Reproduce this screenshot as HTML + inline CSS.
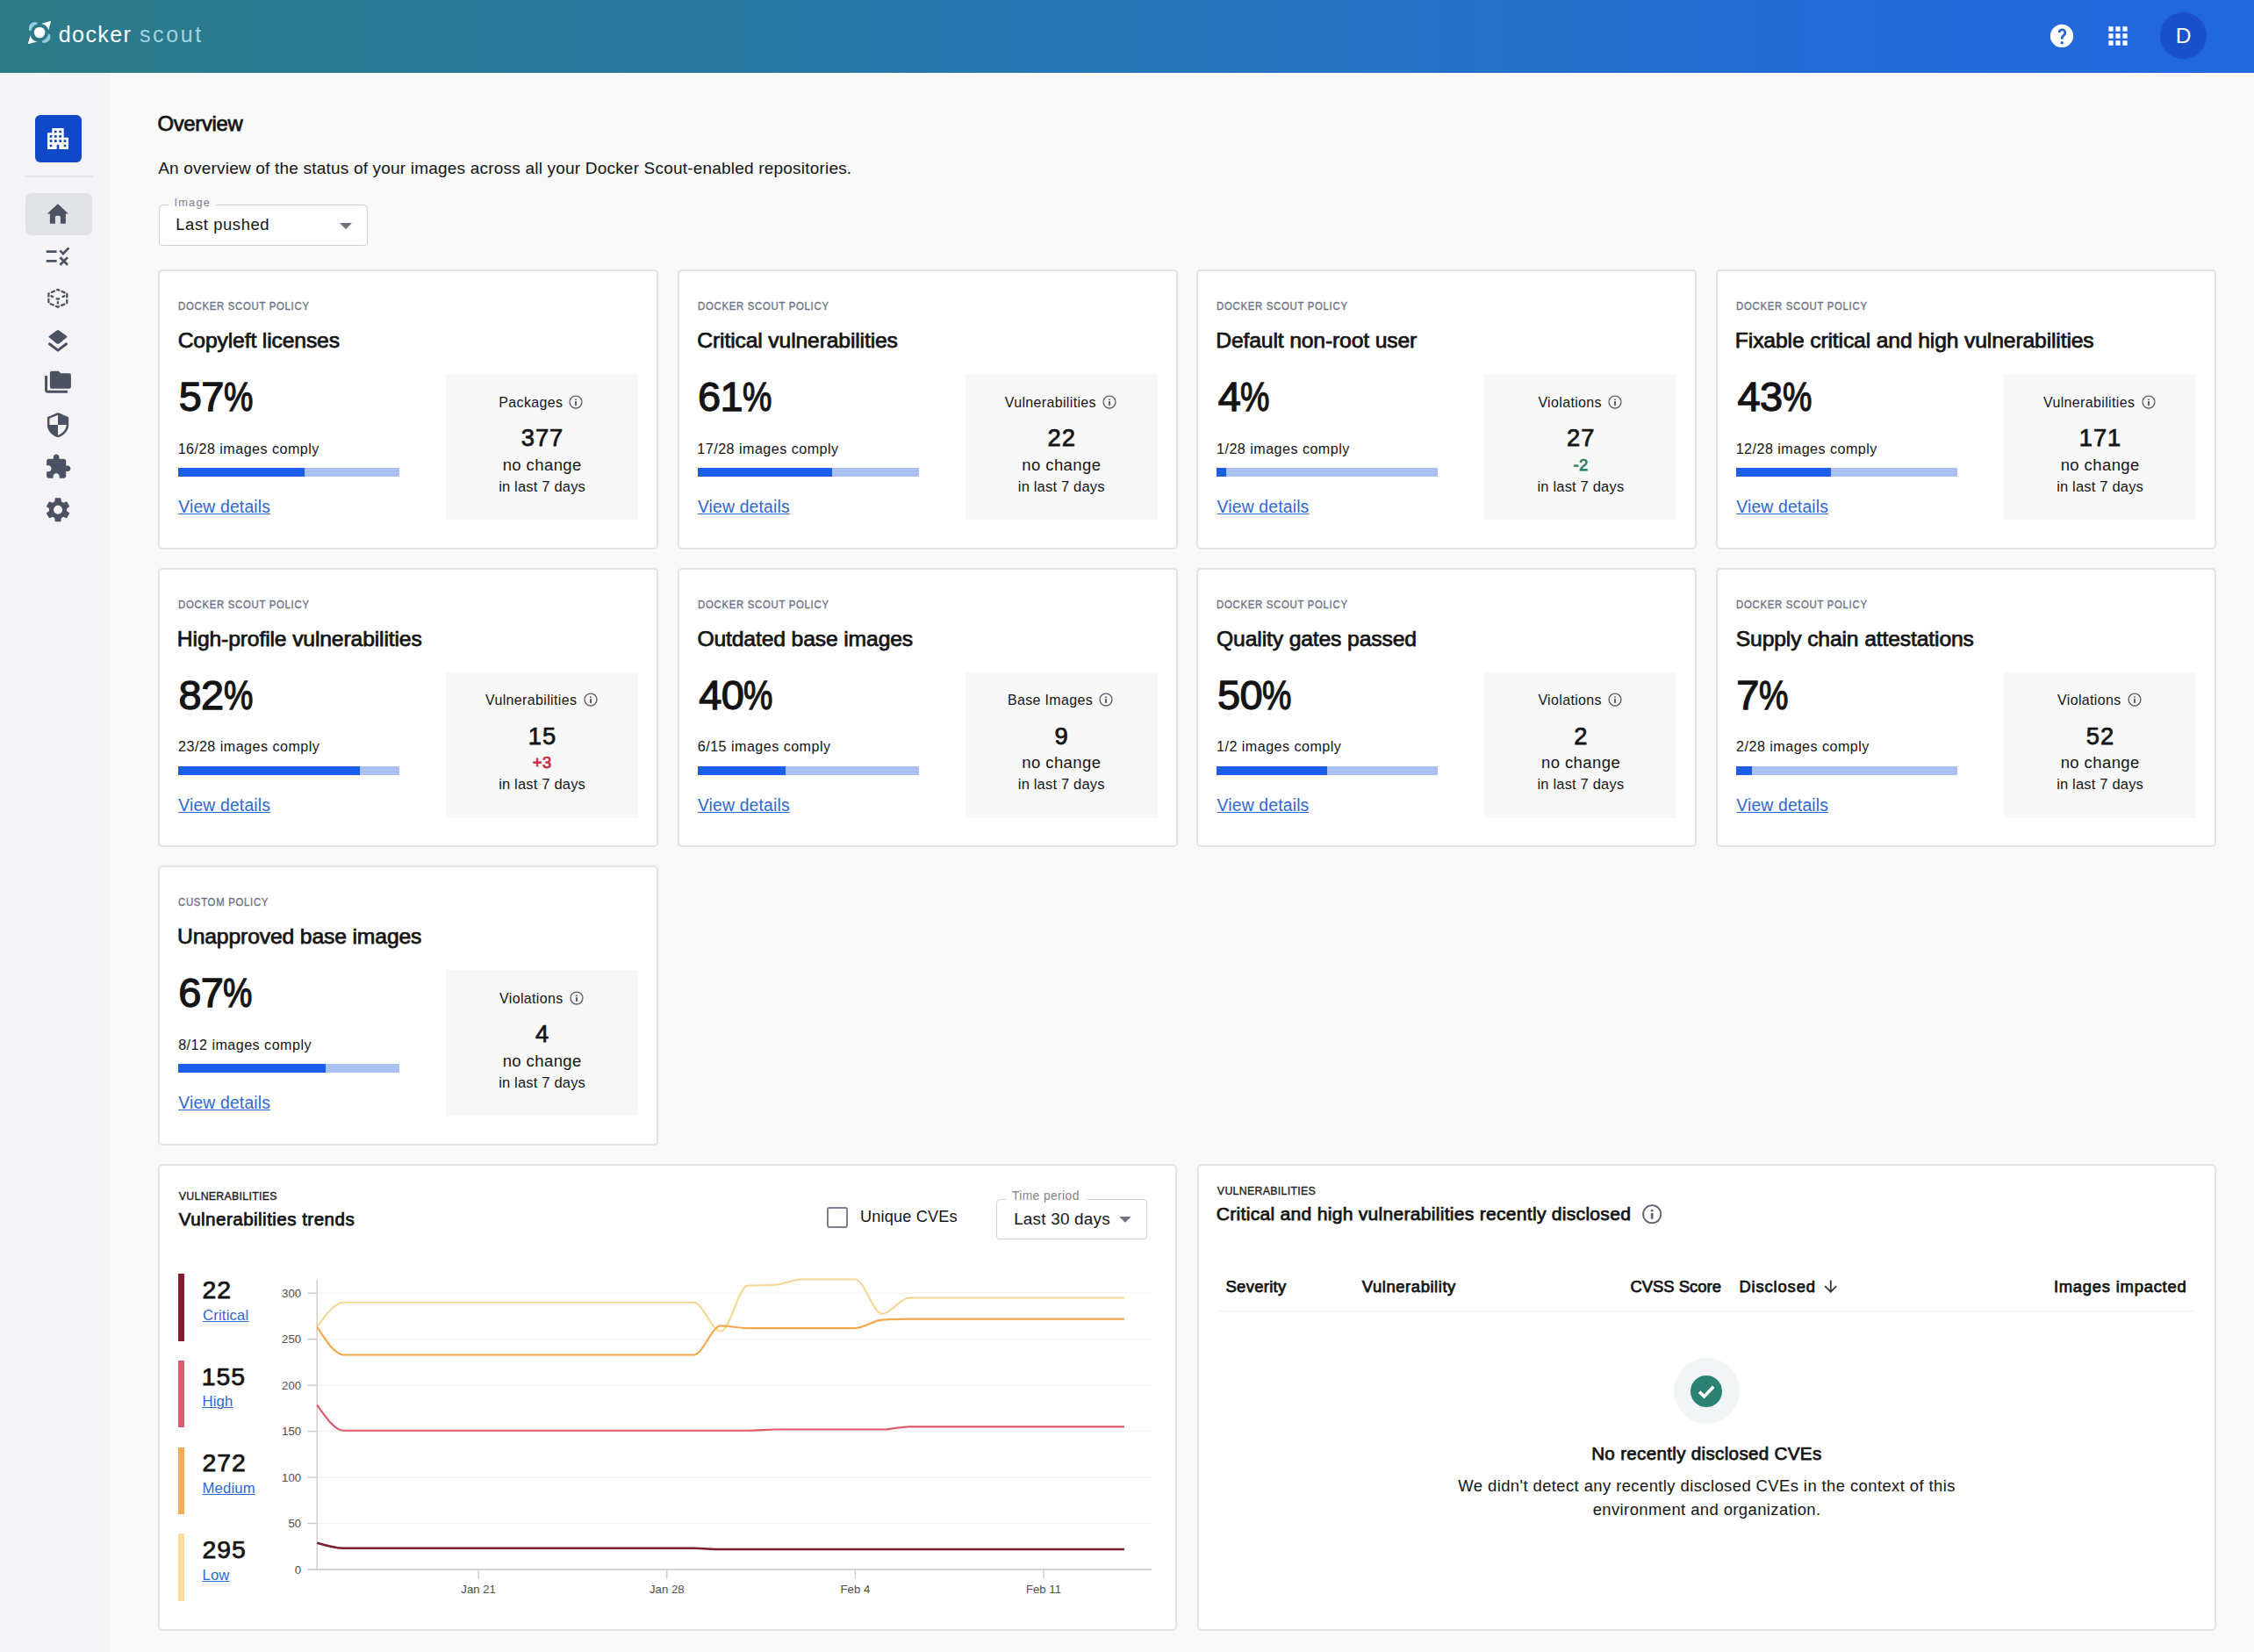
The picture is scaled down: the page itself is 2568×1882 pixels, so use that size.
<!DOCTYPE html><html><head><meta charset="utf-8"><title>Docker Scout</title><style>
*{box-sizing:border-box;margin:0;padding:0}
html,body{width:2568px;height:1882px;overflow:hidden}
body{position:relative;background:#f9f9f9;font-family:"Liberation Sans",sans-serif;color:#141414}
.t{position:absolute;line-height:1;white-space:nowrap}
.m{-webkit-text-stroke:0.75px currentColor}
.abs{position:absolute}
#hdr{position:absolute;left:0;top:0;width:2568px;height:83px;background:linear-gradient(90deg,#2c7a87 0%,#2a79a0 30%,#2673bd 55%,#236bd3 78%,#2167de 100%)}
#side{position:absolute;left:0;top:83px;width:126px;height:1799px;background:#f4f4f6}
.card{position:absolute;background:#fff;border:2px solid #e3e3e3;border-radius:5px}
.box{position:absolute;background:#f8f8f9}
.lbl{color:#6b7083;-webkit-text-stroke:0.35px currentColor!important}
.sm{-webkit-text-stroke:0.35px currentColor!important}
.bar{position:absolute;height:10px;background:#a9c1f1}
.bar i{position:absolute;left:0;top:0;height:100%;background:#1d5ee8}
.lnk{color:#2f67d2;text-decoration:underline;text-decoration-thickness:1.2px;text-underline-offset:0.6px}
</style></head><body>
<div id="hdr"></div>
<svg class="abs" style="left:0;top:0" width="240" height="83" viewBox="0 0 240 83">
<path d="M33.38 34.93 L33.20 34.32 L33.05 33.68 L32.95 33.02 L32.90 32.36 L32.91 31.69 L32.97 31.02 L33.09 30.35 L33.28 29.71 L33.52 29.08 L33.83 28.48 L34.20 27.92 L34.63 27.41 L35.11 26.94 L35.64 26.52 L36.20 26.16 L36.80 25.86 L37.43 25.62 L38.08 25.44 L38.75 25.32 L39.41 25.25 L40.08 25.25 L40.74 25.29 L41.39 25.38 L42.02 25.51 L42.54 27.44 L42.09 27.57 L41.65 27.72 L41.21 27.90 L40.79 28.09 L40.37 28.30 L39.96 28.54 L39.57 28.79 L39.19 29.06 L38.82 29.35 L38.46 29.65 L38.13 29.97 L37.80 30.31 L37.49 30.66 L37.20 31.03 L36.93 31.41 L36.67 31.80 L36.44 32.21 L36.22 32.62 L36.02 33.05 L35.85 33.48 L35.69 33.92 L35.56 34.37 L35.44 34.82 L35.35 35.28 Z" fill="#a6dcec" fill-opacity="0.85"/>
<path d="M56.82 39.07 L57.00 39.68 L57.15 40.32 L57.25 40.98 L57.30 41.64 L57.29 42.31 L57.23 42.98 L57.11 43.65 L56.92 44.29 L56.68 44.92 L56.37 45.52 L56.00 46.08 L55.57 46.59 L55.09 47.06 L54.56 47.48 L54.00 47.84 L53.40 48.14 L52.77 48.38 L52.12 48.56 L51.45 48.68 L50.79 48.75 L50.12 48.75 L49.46 48.71 L48.81 48.62 L48.18 48.49 L47.66 46.56 L48.11 46.43 L48.55 46.28 L48.99 46.10 L49.41 45.91 L49.83 45.70 L50.24 45.46 L50.63 45.21 L51.01 44.94 L51.38 44.65 L51.74 44.35 L52.07 44.03 L52.40 43.69 L52.71 43.34 L53.00 42.97 L53.27 42.59 L53.53 42.20 L53.76 41.79 L53.98 41.38 L54.18 40.95 L54.35 40.52 L54.51 40.08 L54.64 39.63 L54.76 39.18 L54.85 38.72 Z" fill="#a6dcec" fill-opacity="0.85"/>
<path d="M47.2 26.9 L58.2 23.8 L55.3 34.6 A10.2 10.2 0 0 0 47.2 26.9 Z" fill="#fff"/>
<path d="M31.7 50.2 L34.5 40.2 A10.2 10.2 0 0 0 42.5 47.6 Z" fill="#fff"/>
<circle cx="45.1" cy="37" r="6.3" fill="#fff"/>
</svg>
<div class="t" style="left:66.75px;top:27.00px;font-size:25.12px;letter-spacing:1.357px;color:#fff">docker</div>
<div class="t" style="left:159.00px;top:27.00px;font-size:25.12px;letter-spacing:2.562px;color:#9fd3e3">scout</div>
<svg class="abs" style="left:2330px;top:20px" width="40" height="40" viewBox="2330 20 40 40"><circle cx="2349" cy="40.9" r="13.1" fill="#fff"/><path d="M2346 37.3 A3.4 3.4 0 1 1 2351.7 39.7 L2350.3 41 Q2349.3 41.9 2349.3 43.3 V44.5" fill="none" stroke="#2161c9" stroke-width="2.7"/><circle cx="2349.2" cy="48.8" r="1.7" fill="#2161c9"/></svg>
<svg class="abs" style="left:2396.8px;top:24.7px" width="32" height="32" viewBox="0 0 24 24"><path fill="#fff" d="M4 8h4V4H4v4zm6 12h4v-4h-4v4zm-6 0h4v-4H4v4zm0-6h4v-4H4v4zm6 0h4v-4h-4v4zm6-10v4h4V4h-4zm-6 4h4V4h-4v4zm6 6h4v-4h-4v4zm0 6h4v-4h-4v4z"/></svg>
<div class="abs" style="left:2461.1px;top:14.2px;width:52.7px;height:52.7px;border-radius:50%;background:#1a50c9"></div>
<div class="t" style="left:2187.50px;top:29.00px;font-size:24.50px;width:600.00px;text-align:center;color:#fff">D</div>
<div id="side"></div>
<div class="abs" style="left:40px;top:131px;width:53px;height:54px;border-radius:6px;background:#1049c8"></div>
<svg class="abs" style="left:50px;top:141.9px" width="32" height="32" viewBox="0 0 24 24"><path fill="#fff" d="M17 11V3H7v4H3v14h8v-4h2v4h8V11h-4zM7 19H5v-2h2v2zm0-4H5v-2h2v2zm0-4H5V9h2v2zm4 4H9v-2h2v2zm0-4H9V9h2v2zm0-4H9V5h2v2zm4 8h-2v-2h2v2zm0-4h-2V9h2v2zm0-4h-2V5h2v2zm4 12h-2v-2h2v2zm0-4h-2v-2h2v2z"/></svg>
<div class="abs" style="left:28px;top:200.3px;width:78px;height:1.5px;background:#e2e3e7"></div>
<div class="abs" style="left:29px;top:220px;width:76px;height:48px;border-radius:7px;background:#e1e3e7"></div>
<svg class="abs" style="left:0;top:0" width="126" height="620" viewBox="0 0 126 620">
<path fill="#4c5262" d="M65.85 232.3 L78 243.6 L74.9 243.6 L74.9 254.8 L68.9 254.8 L68.9 247.6 Q68.9 245.8 67.1 245.8 L64.7 245.8 Q62.9 245.8 62.9 247.6 L62.9 254.8 L56.9 254.8 L56.9 243.6 L53.7 243.6 Z"/>
<g stroke="#4c5262" stroke-width="2.7" fill="none">
<path d="M52.8 286.6 H64.6 M52.8 297.4 H64.6"/>
<path d="M68.3 285.4 L71.9 289 L78.4 282.4"/>
<path d="M68.4 293.2 L77 301.8 M77 293.2 L68.4 301.8"/>
</g>
<g stroke="#4c5262" stroke-width="2.3" fill="none" stroke-linecap="round" stroke-dasharray="3.4 3.4" stroke-dashoffset="1.7">
<path d="M65.85 329.9 L76.3 334.5 L76.3 345.3 L65.85 349.7 L55.4 345.3 L55.4 334.5 Z"/>
</g>
<g stroke="#4c5262" stroke-width="2.3" fill="none" stroke-linecap="round">
<path d="M58.4 337.3 L60.2 338.1 M71.5 338.1 L73.3 337.3 M64.6 340.3 L65.85 341 L67.1 340.3 M65.85 344.2 L65.85 345.6"/>
</g>
<path fill="#4c5262" d="M66 375.9 Q66.8 375.9 67.4 376.4 L76.2 383 Q76.9 383.6 76.2 384.2 L67.4 391.4 Q66 392.3 64.6 391.4 L55.8 384.2 Q55.1 383.6 55.8 383 L64.6 376.4 Q65.2 375.9 66 375.9 Z"/>
<path fill="none" stroke="#4c5262" stroke-width="3" stroke-linecap="round" stroke-linejoin="round" d="M56.4 391.8 L66 399.1 L75.6 391.8"/>
<path fill="#4c5262" d="M58.9 422.7 H66.8 L69.3 425.3 H78.9 Q80.9 425.3 80.9 427.3 V440.7 Q80.9 442.7 78.9 442.7 H58.9 Q56.9 442.7 56.9 440.7 V424.7 Q56.9 422.7 58.9 422.7 Z"/>
<path fill="none" stroke="#4c5262" stroke-width="3" d="M52.55 428 V444.3 Q52.55 446.3 54.55 446.3 H76.9"/>
<path fill="#4c5262" d="M66 469.9 L78.2 475.2 L78.2 484 C78.2 490.5 72.8 496.6 66 498.3 C59.2 496.6 53.9 490.5 53.9 484 L53.9 475.2 Z"/>
<path fill="#f4f4f6" d="M66 472.7 L56.4 476.8 L56.4 484.1 L66 484.1 Z"/>
<path fill="#f4f4f6" d="M66 484.1 L75.7 484.1 C75.2 489.5 71.2 494.3 66 495.7 Z"/>
<g transform="translate(50.5 516.2) scale(1.3)"><path fill="#4c5262" d="M20.5 11H19V7c0-1.1-.9-2-2-2h-4V3.5C13 2.12 11.88 1 10.5 1S8 2.12 8 3.5V5H4c-1.1 0-1.99.9-1.99 2v3.8H3.5c1.49 0 2.7 1.21 2.7 2.7s-1.21 2.7-2.7 2.7H2V20c0 1.1.9 2 2 2h3.8v-1.5c0-1.49 1.21-2.7 2.7-2.7 1.49 0 2.7 1.21 2.7 2.7V22H17c1.1 0 2-.9 2-2v-4h1.5c1.38 0 2.5-1.12 2.5-2.5S21.88 11 20.5 11z"/></g>
<g transform="translate(49.26 564) scale(1.4)"><path fill="#4c5262" d="M19.14 12.94c.04-.3.06-.61.06-.94 0-.32-.02-.64-.07-.94l2.03-1.58a.49.49 0 00.12-.61l-1.92-3.32a.49.49 0 00-.59-.22l-2.39.96c-.5-.38-1.03-.7-1.62-.94l-.36-2.54a.48.48 0 00-.48-.41h-3.84c-.24 0-.43.17-.47.41l-.36 2.54c-.59.24-1.13.57-1.62.94l-2.39-.96a.48.48 0 00-.59.22L2.74 8.87c-.12.21-.08.47.12.61l2.03 1.58c-.05.3-.09.63-.09.94s.02.64.07.94l-2.03 1.58a.49.49 0 00-.12.61l1.92 3.32c.12.22.37.29.59.22l2.39-.96c.5.38 1.03.7 1.62.94l.36 2.54c.05.24.24.41.48.41h3.84c.24 0 .44-.17.47-.41l.36-2.54c.59-.24 1.13-.56 1.62-.94l2.39.96c.22.08.47 0 .59-.22l1.92-3.32c.12-.22.07-.47-.12-.61l-2.01-1.58zM12 15.6a3.6 3.6 0 110-7.2 3.6 3.6 0 010 7.2z"/></g>
</svg>
<div class="t m" style="left:179.57px;top:129.00px;font-size:23.84px;letter-spacing:-0.324px;">Overview</div>
<div class="t" style="left:180.16px;top:182.00px;font-size:19.04px;letter-spacing:0.186px;">An overview of the status of your images across all your Docker Scout-enabled repositories.</div>
<div class="abs" style="left:181px;top:233px;width:238px;height:47px;border:1.5px solid #d0d1d5;border-radius:4px;background:#fff"></div>
<div class="abs" style="left:192px;top:232px;width:54px;height:3px;background:#f9f9f9"></div>
<div class="t" style="left:198.42px;top:225.00px;font-size:12.79px;letter-spacing:1.250px;color:#7f828c">Image</div>
<div class="t" style="left:200.29px;top:247.00px;font-size:18.46px;letter-spacing:0.582px;">Last pushed</div>
<svg class="abs" style="left:387px;top:253.8px" width="14" height="7.2" viewBox="0 0 14 7.2"><path d="M0 0h14L7 7.2z" fill="#6e7180"/></svg>
<div class="card" style="left:180.00px;top:307.00px;width:570.0px;height:318.67px"></div>
<div class="t lbl m" style="left:202.97px;top:342.00px;font-size:13.23px;letter-spacing:0.824px;transform:scaleX(0.86);transform-origin:0 0">DOCKER SCOUT POLICY</div>
<div class="t m" style="left:202.65px;top:376.00px;font-size:24.71px;letter-spacing:-0.146px;">Copyleft licenses</div>
<div class="t m" style="left:203.72px;top:429.00px;font-size:46.95px;letter-spacing:-0.600px;-webkit-text-stroke:1.3px currentColor">57<span style="display:inline-block;transform:scaleX(0.8);transform-origin:0 0">%</span></div>
<div class="t" style="left:202.67px;top:503.00px;font-size:16.13px;letter-spacing:0.473px;">16/28 images comply</div>
<div class="bar" style="left:203.00px;top:533.00px;width:252px"><i style="width:144.00px"></i></div>
<div class="t lnk" style="left:203.22px;top:568.00px;font-size:19.33px;letter-spacing:0.176px;">View details</div>
<div class="box" style="left:508.00px;top:426.00px;width:219px;height:166px"></div>
<div class="t" style="left:568.34px;top:451.00px;font-size:15.99px;letter-spacing:0.354px;">Packages</div>
<svg class="abs" style="left:648.25px;top:449.60px" width="16" height="16" viewBox="0 0 16 16"><circle cx="8" cy="8" r="6.95" fill="none" stroke="#5b5e67" stroke-width="1.35"/><rect x="7" y="7.2" width="2" height="4.7" fill="#5b5e67"/><circle cx="8" cy="5.3" r="1" fill="#5b5e67"/></svg>
<div class="t m" style="left:318.01px;top:485.00px;font-size:27.33px;letter-spacing:1.012px;width:600.00px;text-align:center;">377</div>
<div class="t" style="left:317.71px;top:521.00px;font-size:18.49px;letter-spacing:0.421px;width:600.00px;text-align:center;">no change</div>
<div class="t" style="left:317.58px;top:547.00px;font-size:16.56px;letter-spacing:0.165px;width:600.00px;text-align:center;">in last 7 days</div>
<div class="card" style="left:771.67px;top:307.00px;width:570.0px;height:318.67px"></div>
<div class="t lbl m" style="left:794.63px;top:342.00px;font-size:13.23px;letter-spacing:0.824px;transform:scaleX(0.86);transform-origin:0 0">DOCKER SCOUT POLICY</div>
<div class="t m" style="left:794.31px;top:376.00px;font-size:24.71px;letter-spacing:-0.146px;">Critical vulnerabilities</div>
<div class="t m" style="left:794.88px;top:429.00px;font-size:46.95px;letter-spacing:-0.600px;-webkit-text-stroke:1.3px currentColor">61<span style="display:inline-block;transform:scaleX(0.8);transform-origin:0 0">%</span></div>
<div class="t" style="left:794.34px;top:503.00px;font-size:16.13px;letter-spacing:0.473px;">17/28 images comply</div>
<div class="bar" style="left:794.67px;top:533.00px;width:252px"><i style="width:153.00px"></i></div>
<div class="t lnk" style="left:794.88px;top:568.00px;font-size:19.33px;letter-spacing:0.176px;">View details</div>
<div class="box" style="left:1099.67px;top:426.00px;width:219px;height:166px"></div>
<div class="t" style="left:1144.73px;top:451.00px;font-size:15.99px;letter-spacing:0.354px;">Vulnerabilities</div>
<svg class="abs" style="left:1256.44px;top:449.60px" width="16" height="16" viewBox="0 0 16 16"><circle cx="8" cy="8" r="6.95" fill="none" stroke="#5b5e67" stroke-width="1.35"/><rect x="7" y="7.2" width="2" height="4.7" fill="#5b5e67"/><circle cx="8" cy="5.3" r="1" fill="#5b5e67"/></svg>
<div class="t m" style="left:909.67px;top:485.00px;font-size:27.33px;letter-spacing:1.012px;width:600.00px;text-align:center;">22</div>
<div class="t" style="left:909.38px;top:521.00px;font-size:18.49px;letter-spacing:0.421px;width:600.00px;text-align:center;">no change</div>
<div class="t" style="left:909.25px;top:547.00px;font-size:16.56px;letter-spacing:0.165px;width:600.00px;text-align:center;">in last 7 days</div>
<div class="card" style="left:1363.33px;top:307.00px;width:570.0px;height:318.67px"></div>
<div class="t lbl m" style="left:1386.30px;top:342.00px;font-size:13.23px;letter-spacing:0.824px;transform:scaleX(0.86);transform-origin:0 0">DOCKER SCOUT POLICY</div>
<div class="t m" style="left:1385.21px;top:376.00px;font-size:24.71px;letter-spacing:-0.146px;">Default non-root user</div>
<div class="t m" style="left:1387.86px;top:429.00px;font-size:46.95px;letter-spacing:-0.600px;-webkit-text-stroke:1.3px currentColor">4<span style="display:inline-block;transform:scaleX(0.8);transform-origin:0 0">%</span></div>
<div class="t" style="left:1386.00px;top:503.00px;font-size:16.13px;letter-spacing:0.473px;">1/28 images comply</div>
<div class="bar" style="left:1386.33px;top:533.00px;width:252px"><i style="width:10.30px"></i></div>
<div class="t lnk" style="left:1386.55px;top:568.00px;font-size:19.33px;letter-spacing:0.176px;">View details</div>
<div class="box" style="left:1691.33px;top:426.00px;width:219px;height:166px"></div>
<div class="t" style="left:1752.38px;top:451.00px;font-size:15.99px;letter-spacing:0.354px;">Violations</div>
<svg class="abs" style="left:1832.11px;top:449.60px" width="16" height="16" viewBox="0 0 16 16"><circle cx="8" cy="8" r="6.95" fill="none" stroke="#5b5e67" stroke-width="1.35"/><rect x="7" y="7.2" width="2" height="4.7" fill="#5b5e67"/><circle cx="8" cy="5.3" r="1" fill="#5b5e67"/></svg>
<div class="t m" style="left:1501.34px;top:485.00px;font-size:27.33px;letter-spacing:1.012px;width:600.00px;text-align:center;">27</div>
<div class="t m" style="left:1501.04px;top:521.00px;font-size:18.49px;letter-spacing:0.421px;width:600.00px;text-align:center;color:#2b7d68">-2</div>
<div class="t" style="left:1500.92px;top:547.00px;font-size:16.56px;letter-spacing:0.165px;width:600.00px;text-align:center;">in last 7 days</div>
<div class="card" style="left:1955.00px;top:307.00px;width:570.0px;height:318.67px"></div>
<div class="t lbl m" style="left:1977.97px;top:342.00px;font-size:13.23px;letter-spacing:0.824px;transform:scaleX(0.86);transform-origin:0 0">DOCKER SCOUT POLICY</div>
<div class="t m" style="left:1976.87px;top:376.00px;font-size:24.71px;letter-spacing:-0.146px;">Fixable critical and high vulnerabilities</div>
<div class="t m" style="left:1979.52px;top:429.00px;font-size:46.95px;letter-spacing:-0.600px;-webkit-text-stroke:1.3px currentColor">43<span style="display:inline-block;transform:scaleX(0.8);transform-origin:0 0">%</span></div>
<div class="t" style="left:1977.67px;top:503.00px;font-size:16.13px;letter-spacing:0.473px;">12/28 images comply</div>
<div class="bar" style="left:1978.00px;top:533.00px;width:252px"><i style="width:108.00px"></i></div>
<div class="t lnk" style="left:1978.22px;top:568.00px;font-size:19.33px;letter-spacing:0.176px;">View details</div>
<div class="box" style="left:2283.00px;top:426.00px;width:219px;height:166px"></div>
<div class="t" style="left:2328.06px;top:451.00px;font-size:15.99px;letter-spacing:0.354px;">Vulnerabilities</div>
<svg class="abs" style="left:2439.77px;top:449.60px" width="16" height="16" viewBox="0 0 16 16"><circle cx="8" cy="8" r="6.95" fill="none" stroke="#5b5e67" stroke-width="1.35"/><rect x="7" y="7.2" width="2" height="4.7" fill="#5b5e67"/><circle cx="8" cy="5.3" r="1" fill="#5b5e67"/></svg>
<div class="t m" style="left:2093.01px;top:485.00px;font-size:27.33px;letter-spacing:1.012px;width:600.00px;text-align:center;">171</div>
<div class="t" style="left:2092.71px;top:521.00px;font-size:18.49px;letter-spacing:0.421px;width:600.00px;text-align:center;">no change</div>
<div class="t" style="left:2092.58px;top:547.00px;font-size:16.56px;letter-spacing:0.165px;width:600.00px;text-align:center;">in last 7 days</div>
<div class="card" style="left:180.00px;top:646.67px;width:570.0px;height:318.67px"></div>
<div class="t lbl m" style="left:202.97px;top:682.00px;font-size:13.23px;letter-spacing:0.824px;transform:scaleX(0.86);transform-origin:0 0">DOCKER SCOUT POLICY</div>
<div class="t m" style="left:201.87px;top:716.00px;font-size:24.71px;letter-spacing:-0.146px;">High-profile vulnerabilities</div>
<div class="t m" style="left:203.56px;top:769.00px;font-size:46.95px;letter-spacing:-0.600px;-webkit-text-stroke:1.3px currentColor">82<span style="display:inline-block;transform:scaleX(0.8);transform-origin:0 0">%</span></div>
<div class="t" style="left:203.09px;top:842.00px;font-size:16.13px;letter-spacing:0.473px;">23/28 images comply</div>
<div class="bar" style="left:203.00px;top:872.67px;width:252px"><i style="width:207.00px"></i></div>
<div class="t lnk" style="left:203.22px;top:908.00px;font-size:19.33px;letter-spacing:0.176px;">View details</div>
<div class="box" style="left:508.00px;top:765.67px;width:219px;height:166px"></div>
<div class="t" style="left:553.06px;top:790.00px;font-size:15.99px;letter-spacing:0.354px;">Vulnerabilities</div>
<svg class="abs" style="left:664.77px;top:789.27px" width="16" height="16" viewBox="0 0 16 16"><circle cx="8" cy="8" r="6.95" fill="none" stroke="#5b5e67" stroke-width="1.35"/><rect x="7" y="7.2" width="2" height="4.7" fill="#5b5e67"/><circle cx="8" cy="5.3" r="1" fill="#5b5e67"/></svg>
<div class="t m" style="left:318.01px;top:825.00px;font-size:27.33px;letter-spacing:1.012px;width:600.00px;text-align:center;">15</div>
<div class="t m" style="left:317.71px;top:860.00px;font-size:18.49px;letter-spacing:0.421px;width:600.00px;text-align:center;color:#d1263e">+3</div>
<div class="t" style="left:317.58px;top:886.00px;font-size:16.56px;letter-spacing:0.165px;width:600.00px;text-align:center;">in last 7 days</div>
<div class="card" style="left:771.67px;top:646.67px;width:570.0px;height:318.67px"></div>
<div class="t lbl m" style="left:794.63px;top:682.00px;font-size:13.23px;letter-spacing:0.824px;transform:scaleX(0.86);transform-origin:0 0">DOCKER SCOUT POLICY</div>
<div class="t m" style="left:794.40px;top:716.00px;font-size:24.71px;letter-spacing:-0.146px;">Outdated base images</div>
<div class="t m" style="left:796.19px;top:769.00px;font-size:46.95px;letter-spacing:-0.600px;-webkit-text-stroke:1.3px currentColor">40<span style="display:inline-block;transform:scaleX(0.8);transform-origin:0 0">%</span></div>
<div class="t" style="left:794.75px;top:842.00px;font-size:16.13px;letter-spacing:0.473px;">6/15 images comply</div>
<div class="bar" style="left:794.67px;top:872.67px;width:252px"><i style="width:100.80px"></i></div>
<div class="t lnk" style="left:794.88px;top:908.00px;font-size:19.33px;letter-spacing:0.176px;">View details</div>
<div class="box" style="left:1099.67px;top:765.67px;width:219px;height:166px"></div>
<div class="t" style="left:1147.92px;top:790.00px;font-size:15.99px;letter-spacing:0.354px;">Base Images</div>
<svg class="abs" style="left:1252.00px;top:789.27px" width="16" height="16" viewBox="0 0 16 16"><circle cx="8" cy="8" r="6.95" fill="none" stroke="#5b5e67" stroke-width="1.35"/><rect x="7" y="7.2" width="2" height="4.7" fill="#5b5e67"/><circle cx="8" cy="5.3" r="1" fill="#5b5e67"/></svg>
<div class="t m" style="left:909.67px;top:825.00px;font-size:27.33px;letter-spacing:1.012px;width:600.00px;text-align:center;">9</div>
<div class="t" style="left:909.38px;top:860.00px;font-size:18.49px;letter-spacing:0.421px;width:600.00px;text-align:center;">no change</div>
<div class="t" style="left:909.25px;top:886.00px;font-size:16.56px;letter-spacing:0.165px;width:600.00px;text-align:center;">in last 7 days</div>
<div class="card" style="left:1363.33px;top:646.67px;width:570.0px;height:318.67px"></div>
<div class="t lbl m" style="left:1386.30px;top:682.00px;font-size:13.23px;letter-spacing:0.824px;transform:scaleX(0.86);transform-origin:0 0">DOCKER SCOUT POLICY</div>
<div class="t m" style="left:1386.06px;top:716.00px;font-size:24.71px;letter-spacing:-0.146px;">Quality gates passed</div>
<div class="t m" style="left:1387.05px;top:769.00px;font-size:46.95px;letter-spacing:-0.600px;-webkit-text-stroke:1.3px currentColor">50<span style="display:inline-block;transform:scaleX(0.8);transform-origin:0 0">%</span></div>
<div class="t" style="left:1386.00px;top:842.00px;font-size:16.13px;letter-spacing:0.473px;">1/2 images comply</div>
<div class="bar" style="left:1386.33px;top:872.67px;width:252px"><i style="width:126.00px"></i></div>
<div class="t lnk" style="left:1386.55px;top:908.00px;font-size:19.33px;letter-spacing:0.176px;">View details</div>
<div class="box" style="left:1691.33px;top:765.67px;width:219px;height:166px"></div>
<div class="t" style="left:1752.38px;top:790.00px;font-size:15.99px;letter-spacing:0.354px;">Violations</div>
<svg class="abs" style="left:1832.11px;top:789.27px" width="16" height="16" viewBox="0 0 16 16"><circle cx="8" cy="8" r="6.95" fill="none" stroke="#5b5e67" stroke-width="1.35"/><rect x="7" y="7.2" width="2" height="4.7" fill="#5b5e67"/><circle cx="8" cy="5.3" r="1" fill="#5b5e67"/></svg>
<div class="t m" style="left:1501.34px;top:825.00px;font-size:27.33px;letter-spacing:1.012px;width:600.00px;text-align:center;">2</div>
<div class="t" style="left:1501.04px;top:860.00px;font-size:18.49px;letter-spacing:0.421px;width:600.00px;text-align:center;">no change</div>
<div class="t" style="left:1500.92px;top:886.00px;font-size:16.56px;letter-spacing:0.165px;width:600.00px;text-align:center;">in last 7 days</div>
<div class="card" style="left:1955.00px;top:646.67px;width:570.0px;height:318.67px"></div>
<div class="t lbl m" style="left:1977.97px;top:682.00px;font-size:13.23px;letter-spacing:0.824px;transform:scaleX(0.86);transform-origin:0 0">DOCKER SCOUT POLICY</div>
<div class="t m" style="left:1977.78px;top:716.00px;font-size:24.71px;letter-spacing:-0.146px;">Supply chain attestations</div>
<div class="t m" style="left:1978.19px;top:769.00px;font-size:46.95px;letter-spacing:-0.600px;-webkit-text-stroke:1.3px currentColor">7<span style="display:inline-block;transform:scaleX(0.8);transform-origin:0 0">%</span></div>
<div class="t" style="left:1978.09px;top:842.00px;font-size:16.13px;letter-spacing:0.473px;">2/28 images comply</div>
<div class="bar" style="left:1978.00px;top:872.67px;width:252px"><i style="width:18.00px"></i></div>
<div class="t lnk" style="left:1978.22px;top:908.00px;font-size:19.33px;letter-spacing:0.176px;">View details</div>
<div class="box" style="left:2283.00px;top:765.67px;width:219px;height:166px"></div>
<div class="t" style="left:2344.05px;top:790.00px;font-size:15.99px;letter-spacing:0.354px;">Violations</div>
<svg class="abs" style="left:2423.78px;top:789.27px" width="16" height="16" viewBox="0 0 16 16"><circle cx="8" cy="8" r="6.95" fill="none" stroke="#5b5e67" stroke-width="1.35"/><rect x="7" y="7.2" width="2" height="4.7" fill="#5b5e67"/><circle cx="8" cy="5.3" r="1" fill="#5b5e67"/></svg>
<div class="t m" style="left:2093.01px;top:825.00px;font-size:27.33px;letter-spacing:1.012px;width:600.00px;text-align:center;">52</div>
<div class="t" style="left:2092.71px;top:860.00px;font-size:18.49px;letter-spacing:0.421px;width:600.00px;text-align:center;">no change</div>
<div class="t" style="left:2092.58px;top:886.00px;font-size:16.56px;letter-spacing:0.165px;width:600.00px;text-align:center;">in last 7 days</div>
<div class="card" style="left:180.00px;top:986.33px;width:570.0px;height:318.67px"></div>
<div class="t lbl m" style="left:203.32px;top:1021.00px;font-size:13.23px;letter-spacing:0.824px;transform:scaleX(0.86);transform-origin:0 0">CUSTOM POLICY</div>
<div class="t m" style="left:201.99px;top:1055.00px;font-size:24.71px;letter-spacing:-0.146px;">Unapproved base images</div>
<div class="t m" style="left:203.22px;top:1108.00px;font-size:46.95px;letter-spacing:-0.600px;-webkit-text-stroke:1.3px currentColor">67<span style="display:inline-block;transform:scaleX(0.8);transform-origin:0 0">%</span></div>
<div class="t" style="left:203.20px;top:1182.00px;font-size:16.13px;letter-spacing:0.473px;">8/12 images comply</div>
<div class="bar" style="left:203.00px;top:1212.33px;width:252px"><i style="width:168.00px"></i></div>
<div class="t lnk" style="left:203.22px;top:1247.00px;font-size:19.33px;letter-spacing:0.176px;">View details</div>
<div class="box" style="left:508.00px;top:1105.33px;width:219px;height:166px"></div>
<div class="t" style="left:569.05px;top:1130.00px;font-size:15.99px;letter-spacing:0.354px;">Violations</div>
<svg class="abs" style="left:648.78px;top:1128.93px" width="16" height="16" viewBox="0 0 16 16"><circle cx="8" cy="8" r="6.95" fill="none" stroke="#5b5e67" stroke-width="1.35"/><rect x="7" y="7.2" width="2" height="4.7" fill="#5b5e67"/><circle cx="8" cy="5.3" r="1" fill="#5b5e67"/></svg>
<div class="t m" style="left:318.01px;top:1164.00px;font-size:27.33px;letter-spacing:1.012px;width:600.00px;text-align:center;">4</div>
<div class="t" style="left:317.71px;top:1200.00px;font-size:18.49px;letter-spacing:0.421px;width:600.00px;text-align:center;">no change</div>
<div class="t" style="left:317.58px;top:1226.00px;font-size:16.56px;letter-spacing:0.165px;width:600.00px;text-align:center;">in last 7 days</div>
<div class="card" style="left:180px;top:1326px;width:1161px;height:532px"></div>
<div class="t sm m" style="left:203.75px;top:1357.00px;font-size:12.35px;letter-spacing:0.288px;color:#1c1c1e">VULNERABILITIES</div>
<div class="t m" style="left:203.71px;top:1379.00px;font-size:20.64px;letter-spacing:0.445px;">Vulnerabilities trends</div>
<div class="abs" style="left:942.1px;top:1375.4px;width:23.6px;height:23.2px;border:2.3px solid #7d8092;border-radius:3px"></div>
<div class="t" style="left:980.00px;top:1377.00px;font-size:18.17px;letter-spacing:0.169px;">Unique CVEs</div>
<div class="abs" style="left:1135px;top:1365.7px;width:172px;height:46.4px;border:1.5px solid #d0d1d5;border-radius:4px;background:#fff"></div>
<div class="abs" style="left:1146.6px;top:1364.5px;width:91.4px;height:3px;background:#fff"></div>
<div class="t" style="left:1152.89px;top:1356.00px;font-size:13.81px;letter-spacing:0.410px;color:#7f828c">Time period</div>
<div class="t" style="left:1155.15px;top:1380.00px;font-size:18.90px;letter-spacing:0.217px;">Last 30 days</div>
<svg class="abs" style="left:1275.2px;top:1386.1px" width="13.8" height="6.8" viewBox="0 0 14 7"><path d="M0 0h14L7 7z" fill="#6e7180"/></svg>
<div class="abs" style="left:203px;top:1451.20px;width:7px;height:76.6px;background:#851b2c"></div>
<div class="t m" style="left:230.57px;top:1455.00px;font-size:28.34px;letter-spacing:0.925px;">22</div>
<div class="t lnk" style="left:230.95px;top:1491.00px;font-size:16.72px;letter-spacing:0.184px;">Critical</div>
<div class="abs" style="left:203px;top:1549.85px;width:7px;height:76.6px;background:#de5b6c"></div>
<div class="t m" style="left:229.84px;top:1554.00px;font-size:28.34px;letter-spacing:0.925px;">155</div>
<div class="t lnk" style="left:230.43px;top:1589.00px;font-size:16.72px;letter-spacing:0.184px;">High</div>
<div class="abs" style="left:203px;top:1648.50px;width:7px;height:76.6px;background:#f3ab55"></div>
<div class="t m" style="left:230.57px;top:1652.00px;font-size:28.34px;letter-spacing:0.925px;">272</div>
<div class="t lnk" style="left:230.43px;top:1688.00px;font-size:16.72px;letter-spacing:0.184px;">Medium</div>
<div class="abs" style="left:203px;top:1747.15px;width:7px;height:76.6px;background:#fcdc9c"></div>
<div class="t m" style="left:230.57px;top:1751.00px;font-size:28.34px;letter-spacing:0.925px;">295</div>
<div class="t lnk" style="left:230.43px;top:1787.00px;font-size:16.72px;letter-spacing:0.184px;">Low</div>
<svg class="abs" style="left:0;top:0" width="2568" height="1882" viewBox="0 0 2568 1882">
<line x1="362" y1="1735.54" x2="1312.3" y2="1735.54" stroke="#f3f3f3" stroke-width="1.3"/>
<line x1="350.3" y1="1735.54" x2="361" y2="1735.54" stroke="#c9c9c9" stroke-width="1.4"/>
<text x="343.1" y="1740.04" text-anchor="end" font-family="Liberation Sans" font-size="13.2" fill="#4d4d4d">50</text>
<line x1="362" y1="1683.07" x2="1312.3" y2="1683.07" stroke="#f3f3f3" stroke-width="1.3"/>
<line x1="350.3" y1="1683.07" x2="361" y2="1683.07" stroke="#c9c9c9" stroke-width="1.4"/>
<text x="343.1" y="1687.57" text-anchor="end" font-family="Liberation Sans" font-size="13.2" fill="#4d4d4d">100</text>
<line x1="362" y1="1630.61" x2="1312.3" y2="1630.61" stroke="#f3f3f3" stroke-width="1.3"/>
<line x1="350.3" y1="1630.61" x2="361" y2="1630.61" stroke="#c9c9c9" stroke-width="1.4"/>
<text x="343.1" y="1635.11" text-anchor="end" font-family="Liberation Sans" font-size="13.2" fill="#4d4d4d">150</text>
<line x1="362" y1="1578.14" x2="1312.3" y2="1578.14" stroke="#f3f3f3" stroke-width="1.3"/>
<line x1="350.3" y1="1578.14" x2="361" y2="1578.14" stroke="#c9c9c9" stroke-width="1.4"/>
<text x="343.1" y="1582.64" text-anchor="end" font-family="Liberation Sans" font-size="13.2" fill="#4d4d4d">200</text>
<line x1="362" y1="1525.67" x2="1312.3" y2="1525.67" stroke="#f3f3f3" stroke-width="1.3"/>
<line x1="350.3" y1="1525.67" x2="361" y2="1525.67" stroke="#c9c9c9" stroke-width="1.4"/>
<text x="343.1" y="1530.17" text-anchor="end" font-family="Liberation Sans" font-size="13.2" fill="#4d4d4d">250</text>
<line x1="362" y1="1473.21" x2="1312.3" y2="1473.21" stroke="#f3f3f3" stroke-width="1.3"/>
<line x1="350.3" y1="1473.21" x2="361" y2="1473.21" stroke="#c9c9c9" stroke-width="1.4"/>
<text x="343.1" y="1477.71" text-anchor="end" font-family="Liberation Sans" font-size="13.2" fill="#4d4d4d">300</text>
<text x="343.1" y="1792.50" text-anchor="end" font-family="Liberation Sans" font-size="13.2" fill="#4d4d4d">0</text>
<line x1="361.2" y1="1458" x2="361.2" y2="1788.7" stroke="#cbcbcb" stroke-width="1.4"/>
<line x1="350.3" y1="1788" x2="1312.3" y2="1788" stroke="#c6c6c6" stroke-width="1.4"/>
<line x1="545.16" y1="1788" x2="545.16" y2="1798.5" stroke="#cbcbcb" stroke-width="1.4"/>
<text x="545.16" y="1815.1" text-anchor="middle" font-family="Liberation Sans" font-size="13.2" fill="#4d4d4d">Jan 21</text>
<line x1="759.78" y1="1788" x2="759.78" y2="1798.5" stroke="#cbcbcb" stroke-width="1.4"/>
<text x="759.78" y="1815.1" text-anchor="middle" font-family="Liberation Sans" font-size="13.2" fill="#4d4d4d">Jan 28</text>
<line x1="974.40" y1="1788" x2="974.40" y2="1798.5" stroke="#cbcbcb" stroke-width="1.4"/>
<text x="974.40" y="1815.1" text-anchor="middle" font-family="Liberation Sans" font-size="13.2" fill="#4d4d4d">Feb 4</text>
<line x1="1189.02" y1="1788" x2="1189.02" y2="1798.5" stroke="#cbcbcb" stroke-width="1.4"/>
<text x="1189.02" y="1815.1" text-anchor="middle" font-family="Liberation Sans" font-size="13.2" fill="#4d4d4d">Feb 11</text>
<path d="M361.20,1511.51C371.42,1497.61,381.64,1483.70,391.86,1483.70C402.08,1483.70,412.30,1483.70,422.52,1483.70C432.74,1483.70,442.96,1483.70,453.18,1483.70C463.40,1483.70,473.62,1483.70,483.84,1483.70C494.06,1483.70,504.28,1483.70,514.50,1483.70C524.72,1483.70,534.94,1483.70,545.16,1483.70C555.38,1483.70,565.60,1483.70,575.82,1483.70C586.04,1483.70,596.26,1483.70,606.48,1483.70C616.70,1483.70,626.92,1483.70,637.14,1483.70C647.36,1483.70,657.58,1483.70,667.80,1483.70C678.02,1483.70,688.24,1483.70,698.46,1483.70C708.68,1483.70,718.90,1483.70,729.12,1483.70C739.34,1483.70,749.56,1483.70,759.78,1483.70C770.00,1483.70,780.22,1483.70,790.44,1483.70C800.66,1483.70,810.88,1516.76,821.10,1516.76C831.32,1516.76,841.54,1465.17,851.76,1464.61C861.98,1464.05,872.20,1464.33,882.42,1463.77C892.64,1463.21,902.86,1457.47,913.08,1457.47C923.30,1457.47,933.52,1457.47,943.74,1457.47C953.96,1457.47,964.18,1457.47,974.40,1457.47C984.62,1457.47,994.84,1496.82,1005.06,1496.82C1015.28,1496.82,1025.50,1478.46,1035.72,1478.46C1045.94,1478.46,1056.16,1478.46,1066.38,1478.46C1076.60,1478.46,1086.82,1478.46,1097.04,1478.46C1107.26,1478.46,1117.48,1478.46,1127.70,1478.46C1137.92,1478.46,1148.14,1478.46,1158.36,1478.46C1168.58,1478.46,1178.80,1478.46,1189.02,1478.46C1199.24,1478.46,1209.46,1478.46,1219.68,1478.46C1229.90,1478.46,1240.12,1478.46,1250.34,1478.46C1260.56,1478.46,1270.78,1478.46,1281.00,1478.46" fill="none" stroke="#f7d693" stroke-width="2.1"/>
<path d="M361.20,1511.51C371.42,1527.51,381.64,1543.51,391.86,1543.51C402.08,1543.51,412.30,1543.51,422.52,1543.51C432.74,1543.51,442.96,1543.51,453.18,1543.51C463.40,1543.51,473.62,1543.51,483.84,1543.51C494.06,1543.51,504.28,1543.51,514.50,1543.51C524.72,1543.51,534.94,1543.51,545.16,1543.51C555.38,1543.51,565.60,1543.51,575.82,1543.51C586.04,1543.51,596.26,1543.51,606.48,1543.51C616.70,1543.51,626.92,1543.51,637.14,1543.51C647.36,1543.51,657.58,1543.51,667.80,1543.51C678.02,1543.51,688.24,1543.51,698.46,1543.51C708.68,1543.51,718.90,1543.51,729.12,1543.51C739.34,1543.51,749.56,1543.51,759.78,1543.51C770.00,1543.51,780.22,1543.51,790.44,1543.51C800.66,1543.51,810.88,1510.46,821.10,1510.46C831.32,1510.46,841.54,1513.08,851.76,1513.08C861.98,1513.08,872.20,1513.08,882.42,1513.08C892.64,1513.08,902.86,1513.08,913.08,1513.08C923.30,1513.08,933.52,1513.08,943.74,1513.08C953.96,1513.08,964.18,1513.08,974.40,1513.08C984.62,1513.08,994.84,1504.34,1005.06,1503.64C1015.28,1502.94,1025.50,1502.59,1035.72,1502.59C1045.94,1502.59,1056.16,1502.59,1066.38,1502.59C1076.60,1502.59,1086.82,1502.59,1097.04,1502.59C1107.26,1502.59,1117.48,1502.59,1127.70,1502.59C1137.92,1502.59,1148.14,1502.59,1158.36,1502.59C1168.58,1502.59,1178.80,1502.59,1189.02,1502.59C1199.24,1502.59,1209.46,1502.59,1219.68,1502.59C1229.90,1502.59,1240.12,1502.59,1250.34,1502.59C1260.56,1502.59,1270.78,1502.59,1281.00,1502.59" fill="none" stroke="#f2a94c" stroke-width="2.2"/>
<path d="M361.20,1600.70C371.42,1615.23,381.64,1629.77,391.86,1629.77C402.08,1629.77,412.30,1629.77,422.52,1629.77C432.74,1629.77,442.96,1629.77,453.18,1629.77C463.40,1629.77,473.62,1629.77,483.84,1629.77C494.06,1629.77,504.28,1629.77,514.50,1629.77C524.72,1629.77,534.94,1629.77,545.16,1629.77C555.38,1629.77,565.60,1629.77,575.82,1629.77C586.04,1629.77,596.26,1629.77,606.48,1629.77C616.70,1629.77,626.92,1629.77,637.14,1629.77C647.36,1629.77,657.58,1629.77,667.80,1629.77C678.02,1629.77,688.24,1629.77,698.46,1629.77C708.68,1629.77,718.90,1629.77,729.12,1629.77C739.34,1629.77,749.56,1629.77,759.78,1629.77C770.00,1629.77,780.22,1629.77,790.44,1629.77C800.66,1629.77,810.88,1629.77,821.10,1629.77C831.32,1629.77,841.54,1629.77,851.76,1629.77C861.98,1629.77,872.20,1628.51,882.42,1628.51C892.64,1628.51,902.86,1628.51,913.08,1628.51C923.30,1628.51,933.52,1628.51,943.74,1628.51C953.96,1628.51,964.18,1628.51,974.40,1628.51C984.62,1628.51,994.84,1628.51,1005.06,1628.51C1015.28,1628.51,1025.50,1625.36,1035.72,1625.36C1045.94,1625.36,1056.16,1625.36,1066.38,1625.36C1076.60,1625.36,1086.82,1625.36,1097.04,1625.36C1107.26,1625.36,1117.48,1625.36,1127.70,1625.36C1137.92,1625.36,1148.14,1625.36,1158.36,1625.36C1168.58,1625.36,1178.80,1625.36,1189.02,1625.36C1199.24,1625.36,1209.46,1625.36,1219.68,1625.36C1229.90,1625.36,1240.12,1625.36,1250.34,1625.36C1260.56,1625.36,1270.78,1625.36,1281.00,1625.36" fill="none" stroke="#de5b6c" stroke-width="2.2"/>
<path d="M361.20,1757.78C371.42,1760.82,381.64,1763.87,391.86,1763.87C402.08,1763.87,412.30,1763.87,422.52,1763.87C432.74,1763.87,442.96,1763.87,453.18,1763.87C463.40,1763.87,473.62,1763.87,483.84,1763.87C494.06,1763.87,504.28,1763.87,514.50,1763.87C524.72,1763.87,534.94,1763.87,545.16,1763.87C555.38,1763.87,565.60,1763.87,575.82,1763.87C586.04,1763.87,596.26,1763.87,606.48,1763.87C616.70,1763.87,626.92,1763.87,637.14,1763.87C647.36,1763.87,657.58,1763.87,667.80,1763.87C678.02,1763.87,688.24,1763.87,698.46,1763.87C708.68,1763.87,718.90,1763.87,729.12,1763.87C739.34,1763.87,749.56,1763.87,759.78,1763.87C770.00,1763.87,780.22,1763.87,790.44,1763.87C800.66,1763.87,810.88,1764.92,821.10,1764.92C831.32,1764.92,841.54,1764.92,851.76,1764.92C861.98,1764.92,872.20,1764.92,882.42,1764.92C892.64,1764.92,902.86,1764.92,913.08,1764.92C923.30,1764.92,933.52,1764.92,943.74,1764.92C953.96,1764.92,964.18,1764.92,974.40,1764.92C984.62,1764.92,994.84,1764.92,1005.06,1764.92C1015.28,1764.92,1025.50,1764.92,1035.72,1764.92C1045.94,1764.92,1056.16,1764.92,1066.38,1764.92C1076.60,1764.92,1086.82,1764.92,1097.04,1764.92C1107.26,1764.92,1117.48,1764.92,1127.70,1764.92C1137.92,1764.92,1148.14,1764.92,1158.36,1764.92C1168.58,1764.92,1178.80,1764.92,1189.02,1764.92C1199.24,1764.92,1209.46,1764.92,1219.68,1764.92C1229.90,1764.92,1240.12,1764.92,1250.34,1764.92C1260.56,1764.92,1270.78,1764.92,1281.00,1764.92" fill="none" stroke="#7e1d2f" stroke-width="2.5"/>
</svg>
<div class="card" style="left:1364px;top:1326px;width:1161px;height:532px"></div>
<div class="t sm m" style="left:1386.85px;top:1351.00px;font-size:12.35px;letter-spacing:0.302px;color:#1c1c1e">VULNERABILITIES</div>
<div class="t m" style="left:1385.83px;top:1372.00px;font-size:21.08px;letter-spacing:0.274px;">Critical and high vulnerabilities recently disclosed</div>
<svg class="abs" style="left:1870.9px;top:1372.2px" width="22.4" height="22.4" viewBox="0 0 22.4 22.4"><circle cx="11.2" cy="11.2" r="10.1" fill="none" stroke="#5f636e" stroke-width="1.9"/><rect x="9.85" y="10" width="2.7" height="6.6" fill="#5f636e"/><circle cx="11.2" cy="7.2" r="1.4" fill="#5f636e"/></svg>
<div class="t m" style="left:1396.46px;top:1457.00px;font-size:18.46px;letter-spacing:0.313px;">Severity</div>
<div class="t m" style="left:1551.82px;top:1457.00px;font-size:18.46px;letter-spacing:0.564px;">Vulnerability</div>
<div class="t m" style="left:1857.46px;top:1457.00px;font-size:18.46px;letter-spacing:-0.007px;">CVSS Score</div>
<div class="t m" style="left:1981.39px;top:1457.00px;font-size:18.46px;letter-spacing:0.835px;">Disclosed</div>
<div class="t m" style="left:2339.90px;top:1457.00px;font-size:18.46px;letter-spacing:0.745px;">Images impacted</div>
<svg class="abs" style="left:2074.5px;top:1455px" width="21.5" height="21.5" viewBox="0 0 24 24"><path d="M20 12l-1.41-1.41L13 16.17V4h-2v12.17l-5.58-5.59L4 12l8 8 8-8z" fill="#3a3a3a"/></svg>
<div class="abs" style="left:1387.5px;top:1492.6px;width:1112.5px;height:1.5px;background:#f0f0f0"></div>
<div class="abs" style="left:1906.8px;top:1547px;width:75.2px;height:75.2px;border-radius:50%;background:#f2f5f5"></div>
<div class="abs" style="left:1926.4px;top:1566.5px;width:36px;height:36px;border-radius:50%;background:#2b8272"></div>
<svg class="abs" style="left:1926.4px;top:1566.5px" width="36" height="36" viewBox="0 0 36 36"><path d="M10 18.6l5.6 5.4 10.6-11.2" fill="none" stroke="#fff" stroke-width="3.6"/></svg>
<div class="t m" style="left:1444.35px;top:1646.00px;font-size:20.64px;letter-spacing:0.303px;width:1000.00px;text-align:center;">No recently disclosed CVEs</div>
<div class="t" style="left:1444.60px;top:1684.00px;font-size:18.46px;letter-spacing:0.408px;width:1000.00px;text-align:center;">We didn't detect any recently disclosed CVEs in the context of this</div>
<div class="t" style="left:1444.60px;top:1711.00px;font-size:18.46px;letter-spacing:0.408px;width:1000.00px;text-align:center;">environment and organization.</div>
</body></html>
